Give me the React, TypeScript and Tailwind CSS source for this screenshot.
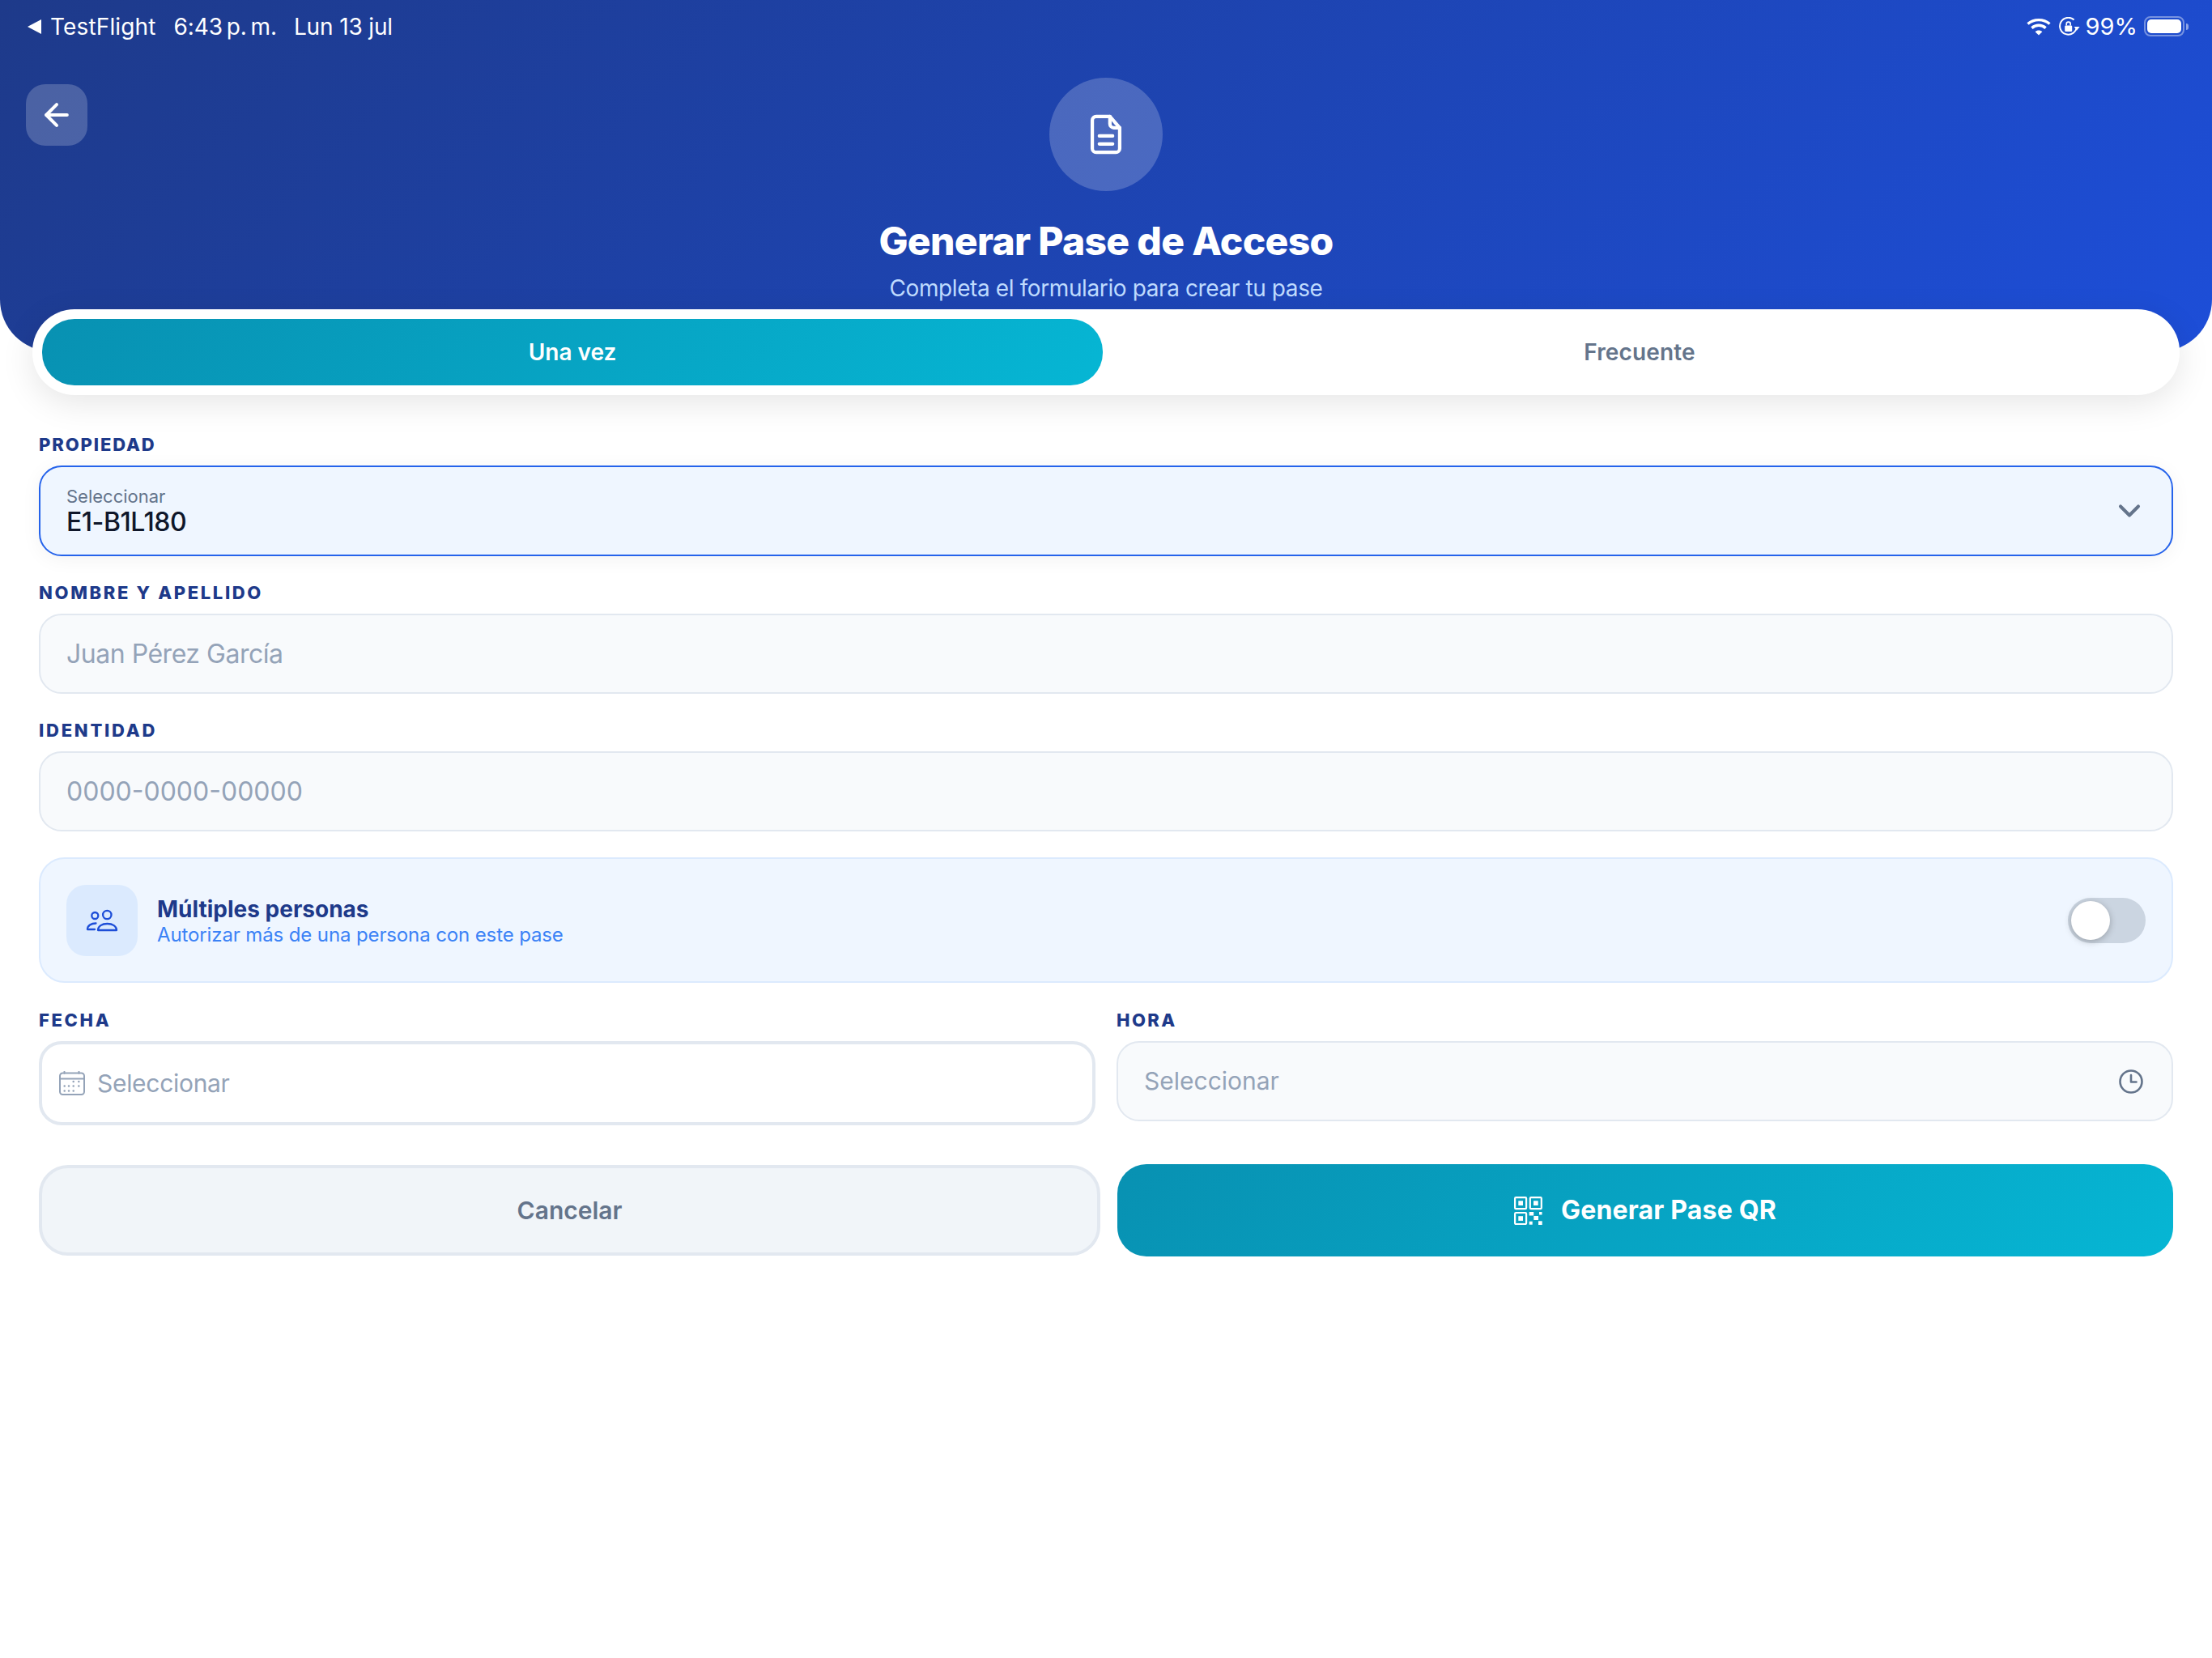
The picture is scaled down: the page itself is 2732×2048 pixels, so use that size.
import { ArrowLeft, ChevronDown } from 'lucide-react';

function Label({ children, tracking }: { children: string; tracking: string }) {
  return (
    <p className={`mb-[13px] h-[26px] text-[22px] leading-[26px] font-extrabold text-[#1e3a8a] uppercase ${tracking}`}>
      {children}
    </p>
  );
}

function DocIcon() {
  return (
    <svg width="58" height="58" viewBox="0 0 24 24" fill="none" stroke="white" strokeWidth="1.75" strokeLinecap="round" strokeLinejoin="round">
      <path d="M14 2.8H7a2 2 0 0 0-2 2v14.4a2 2 0 0 0 2 2h10a2 2 0 0 0 2-2V8.6z" />
      <path d="M14 2.8v3.8a2 2 0 0 0 2 2h3" />
      <path d="M8.6 12.8h6.8" />
      <path d="M8.6 16.9h6.8" />
    </svg>
  );
}

function UsersIcon() {
  return (
    <svg width="40" height="30" viewBox="0 0 40 30" fill="none" stroke="#1d4ed8" strokeWidth="2.3" strokeLinecap="round" strokeLinejoin="round">
      <circle cx="11.3" cy="9" r="4" />
      <circle cx="26.3" cy="8" r="5.2" />
      <path d="M15 27C15 22 20 19 26.5 19C33 19 38 22 38 27Z" />
      <path d="M12.5 18.5C6.5 18.5 2 21.5 2 26H11" />
    </svg>
  );
}

function CalendarIcon() {
  return (
    <svg width="32" height="30" viewBox="0 0 32 30" fill="none" stroke="#94a3b8" strokeWidth="2" strokeLinecap="round">
      <rect x="1" y="2.5" width="30" height="26.5" rx="3.5" />
      <path d="M1 9.5h30" />
      <path d="M6.5 .8v2M24.5 .8v2" />
      <g fill="#94a3b8" stroke="none">
        <circle cx="17.7" cy="13" r="1.25" />
        <circle cx="24.3" cy="13" r="1.25" />
        <circle cx="6.7" cy="18.6" r="1.25" />
        <circle cx="12" cy="18.6" r="1.25" />
        <circle cx="17.7" cy="18.6" r="1.25" />
        <circle cx="24.3" cy="18.6" r="1.25" />
        <circle cx="6.7" cy="24.4" r="1.25" />
        <circle cx="12" cy="24.4" r="1.25" />
        <circle cx="17.7" cy="24.4" r="1.25" />
      </g>
    </svg>
  );
}

function ClockIcon() {
  return (
    <svg width="32" height="32" viewBox="0 0 32 32" fill="none" stroke="#64748b" strokeWidth="2.6" strokeLinecap="round" strokeLinejoin="round">
      <circle cx="16" cy="16" r="13.5" />
      <path d="M16 8v8.5h6.5" />
    </svg>
  );
}

function QrIcon() {
  return (
    <svg width="35" height="35" viewBox="0 0 35 35" fill="none" stroke="white" strokeWidth="2.2">
      <rect x="1.1" y="1.1" width="14" height="14" rx="1.2" />
      <rect x="19.8" y="1.1" width="14" height="14" rx="1.2" />
      <rect x="1.1" y="20" width="14" height="14" rx="1.2" />
      <g fill="white" stroke="none">
        <rect x="5.3" y="5.3" width="5.7" height="5.7" />
        <rect x="24" y="5.3" width="5.7" height="5.7" />
        <rect x="5.3" y="24.2" width="5.7" height="5.7" />
        <rect x="18.7" y="19" width="5.5" height="4.5" />
        <rect x="31" y="19" width="3.5" height="3.5" />
        <rect x="24.3" y="24" width="5.7" height="5" />
        <rect x="18.7" y="30.7" width="4" height="4" />
        <rect x="30" y="30.3" width="4.7" height="4.7" />
      </g>
    </svg>
  );
}

function WifiIcon() {
  return (
    <svg width="30" height="22" viewBox="0 0 30 22" fill="none" stroke="white" strokeWidth="3.4">
      <path d="M1.5 7.6C9 .9 21 .9 28.5 7.6" />
      <path d="M6.4 12.6C11.4 8.2 18.6 8.2 23.6 12.6" />
      <path d="M15 21.5 10.6 17.2C13 15 17 15 19.4 17.2Z" fill="white" stroke="none" />
    </svg>
  );
}

function RotationLockIcon() {
  return (
    <svg width="26" height="24" viewBox="0 0 26 24" fill="none" stroke="white" strokeWidth="2">
      <path d="M21.9 12A10.4 10.4 0 1 1 18.6 3.6" />
      <path d="M18.6 12h7l-3.5 4.6z" fill="white" stroke="none" />
      <rect x="7.2" y="10.5" width="9" height="7.5" rx="1.2" fill="white" stroke="none" />
      <path d="M9.2 10.5V8.6a2.5 2.5 0 0 1 5 0v1.9" strokeWidth="1.6" />
    </svg>
  );
}

function StatusBar() {
  return (
    <div className="flex h-[64px] items-center justify-between pt-[1px] pr-[29px] pl-[34px] text-[28px] leading-[34px] font-normal text-white">
      <div className="flex items-center">
        <span className="h-0 w-0 border-y-[9px] border-r-[17px] border-y-transparent border-r-white" />
        <span className="ml-[11px] tracking-[0.005em]">TestFlight</span>
        <span className="ml-[22px] tracking-[-0.005em]">{'6:43\u2009p.\u2009m.'}</span>
        <span className="ml-[21px] tracking-[-0.005em]">Lun 13 jul</span>
      </div>
      <div className="flex items-center">
        <WifiIcon />
        <span className="ml-[10px] flex">
          <RotationLockIcon />
        </span>
        <span className="ml-[7px] text-[29px]">99%</span>
        <span className="ml-[8px] flex items-center">
          <span className="flex h-[25px] w-[50px] items-center rounded-[8px] border-2 border-white/40 p-[2px]">
            <span className="h-full w-full rounded-[5px] bg-white" />
          </span>
          <span className="ml-[2px] h-[8px] w-[3px] rounded-r-full bg-white/50" />
        </span>
      </div>
    </div>
  );
}

export default function App() {
  return (
    <div className="min-h-screen w-full bg-white font-['Inter',sans-serif] antialiased">
      <header className="h-[434px] w-full rounded-b-[64px] bg-[linear-gradient(135deg,#1e3a8a,#1d4ed8)]">
        <StatusBar />
        <div className="grid grid-cols-[1fr_auto_1fr] px-[32px] pt-[32px]">
          <button className="mt-[8px] flex h-[76px] w-[76px] items-center justify-center rounded-[24px] bg-white/20">
            <ArrowLeft size={44} color="white" strokeWidth={2.2} />
          </button>
          <div className="flex flex-col items-center">
            <div className="flex h-[140px] w-[140px] items-center justify-center rounded-full bg-white/20">
              <DocIcon />
            </div>
            <h1 className="mt-[34px] text-[48px] leading-[56px] font-extrabold tracking-[-0.0145em] text-white">
              Generar Pase de Acceso
            </h1>
            <p className="mt-[10px] text-[28px] leading-[40px] tracking-[-0.014em] text-[#bfdbfe]">
              Completa el formulario para crear tu pase
            </p>
          </div>
        </div>
      </header>

      <div className="relative mx-[40px] mt-[-52px] flex h-[106px] gap-[8px] rounded-[52px] bg-white p-[12px] shadow-[0_10px_40px_rgba(0,0,0,0.1)]">
        <button className="flex-1 rounded-[40px] bg-[linear-gradient(135deg,#0891b2,#06b6d4)] text-[28px] font-semibold text-white">
          Una vez
        </button>
        <button className="flex-1 text-[28px] font-semibold tracking-[0.005em] text-[#64748b]">Frecuente</button>
      </div>

      <main className="px-[48px] pt-[48px]">
        <Label tracking="tracking-[0.085em]">PROPIEDAD</Label>
        <div className="flex h-[112px] items-center justify-between rounded-[28px] border-2 border-[#2563eb] bg-[#eff6ff] pr-[30px] pl-[32px] shadow-[0_4px_24px_rgba(0,0,0,0.05)]">
          <div>
            <p className="text-[22px] leading-[28px] text-[#64748b]">Seleccionar</p>
            <p className="text-[32px] leading-[36px] font-medium tracking-[-0.015em] text-[#0f172a]">E1-B1L180</p>
          </div>
          <ChevronDown size={44} color="#64748b" strokeWidth={2.2} />
        </div>

        <div className="mt-[32px]">
          <Label tracking="tracking-[0.12em]">Nombre y apellido</Label>
          <div className="flex h-[99px] items-center rounded-[28px] border-2 border-[#e2e8f0] bg-[#f8fafc] px-[32px] text-[32px] tracking-[-0.015em] text-[#94a3b8]">
            Juan Pérez García
          </div>
        </div>

        <div className="mt-[32px]">
          <Label tracking="tracking-[0.125em]">Identidad</Label>
          <div className="flex h-[99px] items-center rounded-[28px] border-2 border-[#e2e8f0] bg-[#f8fafc] px-[32px] text-[32px] text-[#94a3b8]">
            0000-0000-00000
          </div>
        </div>

        <div className="mt-[32px] flex h-[155px] items-center justify-between rounded-[32px] border-2 border-[#dbeafe] bg-[#eff6ff] pr-[32px] pl-[32px]">
          <div className="flex items-center gap-[24px]">
            <div className="flex h-[88px] w-[88px] items-center justify-center rounded-[24px] bg-[#dbeafe]">
              <UsersIcon />
            </div>
            <div>
              <p className="text-[28px] leading-[36px] font-bold text-[#1e3a8a]">Múltiples personas</p>
              <p className="text-[24px] leading-[28px] tracking-[-0.005em] text-[#3b82f6]">
                Autorizar más de una persona con este pase
              </p>
            </div>
          </div>
          <div className="flex h-[56px] w-[96px] items-center rounded-full bg-[#cbd5e1] p-[4px]">
            <span className="h-[48px] w-[48px] rounded-full bg-white shadow-[0_2px_8px_rgba(0,0,0,0.25)]" />
          </div>
        </div>

        <div className="mt-[33px] grid grid-cols-2 gap-[26px]">
          <div>
            <Label tracking="tracking-[0.12em]">Fecha</Label>
            <div className="flex h-[104px] items-center gap-[15px] rounded-[28px] border-4 border-[#e2e8f0] bg-white pl-[21px] text-[30px] tracking-[-0.01em] text-[#94a3b8]">
              <CalendarIcon />
              Seleccionar
            </div>
          </div>
          <div>
            <Label tracking="tracking-[0.11em]">Hora</Label>
            <div className="flex h-[99px] items-center justify-between rounded-[28px] border-2 border-[#e2e8f0] bg-[#f8fafc] pr-[34px] pl-[32px] text-[30px] text-[#94a3b8]">
              Seleccionar
              <ClockIcon />
            </div>
          </div>
        </div>

        <div className="mt-[48px] grid grid-cols-[1311px_1fr] items-center gap-[21px]">
          <button className="h-[112px] rounded-[36px] border-4 border-[#e2e8f0] bg-[#f1f5f9] text-[30px] font-semibold text-[#64748b]">
            Cancelar
          </button>
          <button className="flex h-[114px] items-center justify-center gap-[23px] rounded-[36px] bg-[linear-gradient(135deg,#0891b2,#06b6d4)] text-[32px] font-bold tracking-[0.006em] text-white">
            <QrIcon />
            Generar Pase QR
          </button>
        </div>
      </main>
    </div>
  );
}
